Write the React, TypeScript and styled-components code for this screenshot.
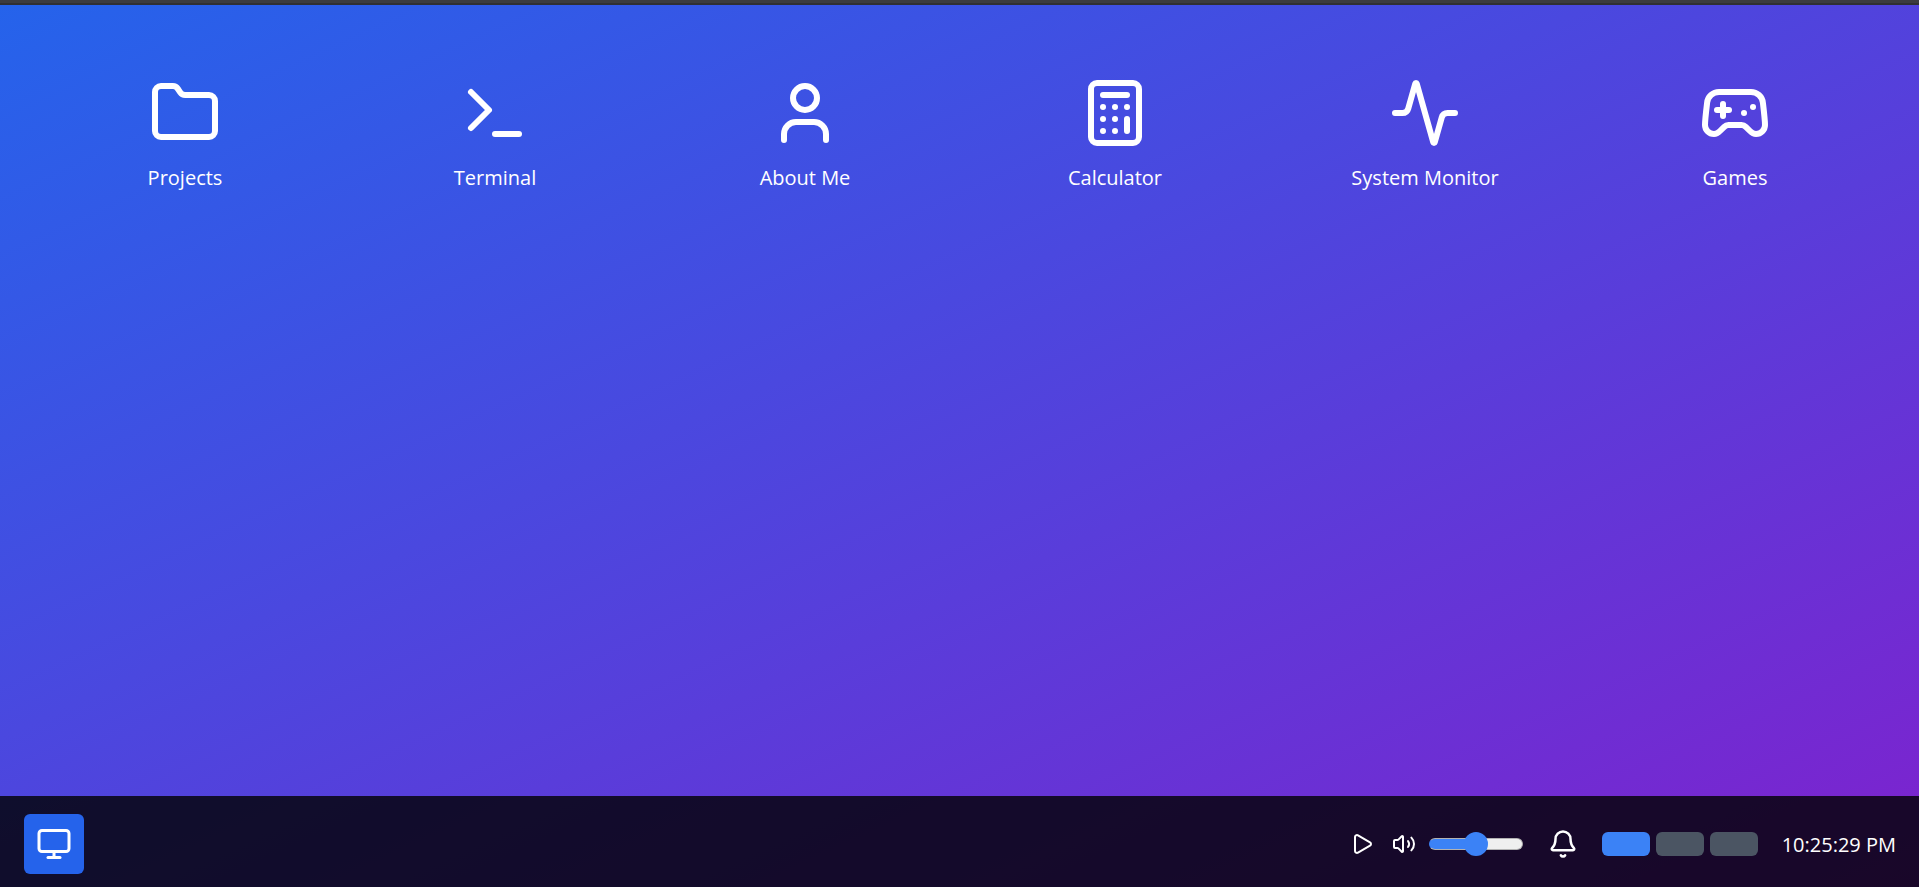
import React, { useState } from "react";
import styled, { createGlobalStyle } from "styled-components";
import {
  Activity,
  Bell,
  Calculator,
  Folder,
  Gamepad2,
  Monitor,
  Play,
  Terminal,
  User,
  Volume2,
} from "lucide-react";

const GlobalStyle = createGlobalStyle`
  *, *::before, *::after { box-sizing: border-box; }
  body {
    margin: 0;
    font-family: "Segoe UI", "Open Sans", "Noto Sans", sans-serif;
    color: #fff;
  }
  button, input { font: inherit; color: inherit; margin: 0; }
  svg { display: block; flex: none; }
`;

const Screen = styled.div`
  display: flex;
  flex-direction: column;
  height: 100vh;
  overflow: hidden;
`;

const TopEdge = styled.div`
  flex: none;
  height: 5px;
  background: #3c3c3f;
  border-bottom: 2px solid #303033;
`;

const Desktop = styled.div`
  flex: 1;
  min-height: 0;
  display: flex;
  flex-direction: column;
  background: linear-gradient(to bottom right, #2563eb, #7e22ce);
`;

const IconGrid = styled.main`
  flex: 1;
  display: grid;
  grid-template-columns: repeat(6, 1fr);
  align-content: start;
  gap: 36px;
  padding: 48px 47px 48px 48px;
`;

const AppButton = styled.button`
  display: flex;
  flex-direction: column;
  align-items: center;
  gap: 12px;
  padding: 24px;
  border: 0;
  border-radius: 12px;
  background: transparent;
  font-size: 20px;
  line-height: 33px;
  cursor: pointer;

  &:hover { background: rgba(255, 255, 255, 0.1); }
`;

const Taskbar = styled.footer`
  display: flex;
  align-items: center;
  justify-content: space-between;
  padding: 18px 23px 13px 24px;
  background: rgba(0, 0, 0, 0.8);
`;

const StartButton = styled.button`
  padding: 12px;
  border: 0;
  border-radius: 6px;
  background: #2563eb;
  cursor: pointer;
`;

const Tray = styled.div`
  display: flex;
  align-items: center;
  gap: 24px;
`;

const AudioControls = styled.div`
  display: flex;
  align-items: center;
  gap: 18px;
`;

const VolumeControl = styled.label`
  display: flex;
  align-items: center;
  gap: 12px;
`;

const TrayButton = styled.button`
  padding: 0;
  border: 0;
  background: transparent;
  cursor: pointer;
`;

const VolumeSlider = styled.input<{ $level: number }>`
  appearance: none;
  width: 96px;
  height: 24px;
  background: transparent;
  cursor: pointer;

  &::-webkit-slider-runnable-track {
    height: 12px;
    margin: 0 1px;
    border: 1px solid #b2b2b2;
    border-left-color: #3b82f6;
    border-radius: 6px;
    background: linear-gradient(
      to right,
      #3b82f6 ${(p) => p.$level}%,
      #efefef ${(p) => p.$level}%
    );
  }

  &::-webkit-slider-thumb {
    appearance: none;
    width: 24px;
    height: 24px;
    margin-top: -7px;
    border-radius: 50%;
    background: #3b82f6;
  }
`;

const Workspaces = styled.div`
  display: flex;
  gap: 6px;
`;

const WorkspaceButton = styled.button<{ $active: boolean }>`
  width: 48px;
  height: 24px;
  padding: 0;
  border: 0;
  border-radius: 6px;
  background: ${(p) => (p.$active ? "#3b82f6" : "#4b5563")};
  cursor: pointer;
`;

const Clock = styled.time`
  font-size: 20px;
  line-height: 33px;
  white-space: nowrap;
`;

const apps = [
  { name: "Projects", Icon: Folder },
  { name: "Terminal", Icon: Terminal },
  { name: "About Me", Icon: User },
  { name: "Calculator", Icon: Calculator },
  { name: "System Monitor", Icon: Activity },
  { name: "Games", Icon: Gamepad2 },
];

export default function App() {
  const [volume, setVolume] = useState(50);
  const [workspace, setWorkspace] = useState(1);

  return (
    <Screen>
      <GlobalStyle />
      <TopEdge />
      <Desktop>
        <IconGrid>
          {apps.map(({ name, Icon }) => (
            <AppButton key={name} type="button">
              <Icon size={72} />
              <span>{name}</span>
            </AppButton>
          ))}
        </IconGrid>
        <Taskbar>
          <StartButton type="button" aria-label="Start">
            <Monitor size={36} />
          </StartButton>
          <Tray>
            <AudioControls>
              <TrayButton type="button" aria-label="Play">
                <Play size={24} />
              </TrayButton>
              <VolumeControl>
                <Volume2 size={24} />
                <VolumeSlider
                  type="range"
                  aria-label="Volume"
                  min={0}
                  max={100}
                  value={volume}
                  $level={volume}
                  onChange={(e) => setVolume(Number(e.target.value))}
                />
              </VolumeControl>
            </AudioControls>
            <TrayButton type="button" aria-label="Notifications">
              <Bell size={30} />
            </TrayButton>
            <Workspaces>
              {[1, 2, 3].map((n) => (
                <WorkspaceButton
                  key={n}
                  type="button"
                  aria-label={`Workspace ${n}`}
                  $active={n === workspace}
                  onClick={() => setWorkspace(n)}
                />
              ))}
            </Workspaces>
            <Clock>10:25:29 PM</Clock>
          </Tray>
        </Taskbar>
      </Desktop>
    </Screen>
  );
}
